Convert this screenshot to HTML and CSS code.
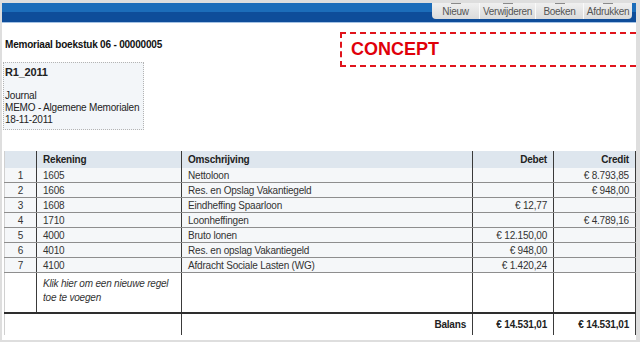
FILE: index.html
```html
<!DOCTYPE html>
<html>

<head>
  <meta charset="UTF-8" />
  <title>Memoriaal boekstuk</title>
  <link rel="stylesheet" href="styles.css">
</head>

<body>
  <div class="frame">
    <div class="topbar">
      <div class="toolbar">
        <button type="button" class="tool tool-nieuw"><span class="tick"></span>Nieuw</button>
        <button type="button" class="tool tool-verwijderen"><span class="tick"></span>Verwijderen</button>
        <button type="button" class="tool tool-boeken"><span class="tick"></span>Boeken</button>
        <button type="button" class="tool tool-afdrukken"><span class="tick"></span>Afdrukken</button>
      </div>
    </div>

    <div class="head">
      <div class="head-left">
        <div class="title">Memoriaal boekstuk 06 - 00000005</div>
        <div class="card">
          <div class="card-code">R1_2011</div>
          <div class="card-line">Journal</div>
          <div class="card-line">MEMO - Algemene Memorialen</div>
          <div class="card-line">18-11-2011</div>
        </div>
      </div>
      <div class="concept">CONCEPT</div>
    </div>

    <table class="lines">
      <colgroup>
        <col class="c-nr">
        <col class="c-rek">
        <col class="c-oms">
        <col class="c-deb">
        <col class="c-cre">
      </colgroup>
      <thead>
        <tr>
          <th></th>
          <th>Rekening</th>
          <th>Omschrijving</th>
          <th class="num">Debet</th>
          <th class="num">Credit</th>
        </tr>
      </thead>
      <tbody>
        <tr><td class="nr">1</td><td>1605</td><td>Nettoloon</td><td class="num"></td><td class="num">€ 8.793,85</td></tr>
        <tr><td class="nr">2</td><td>1606</td><td>Res. en Opslag Vakantiegeld</td><td class="num"></td><td class="num">€ 948,00</td></tr>
        <tr><td class="nr">3</td><td>1608</td><td>Eindheffing Spaarloon</td><td class="num">€ 12,77</td><td class="num"></td></tr>
        <tr><td class="nr">4</td><td>1710</td><td>Loonheffingen</td><td class="num"></td><td class="num">€ 4.789,16</td></tr>
        <tr><td class="nr">5</td><td>4000</td><td>Bruto lonen</td><td class="num">€ 12.150,00</td><td class="num"></td></tr>
        <tr><td class="nr">6</td><td>4010</td><td>Res. en opslag Vakantiegeld</td><td class="num">€ 948,00</td><td class="num"></td></tr>
        <tr><td class="nr">7</td><td>4100</td><td>Afdracht Sociale Lasten (WG)</td><td class="num">€ 1.420,24</td><td class="num"></td></tr>
        <tr class="add-row">
          <td class="nr"></td>
          <td class="add-text">Klik hier om een nieuwe regel<br>toe te voegen</td>
          <td></td>
          <td></td>
          <td></td>
        </tr>
      </tbody>
      <tfoot>
        <tr class="balance">
          <td colspan="2"></td>
          <td class="num">Balans</td>
          <td class="num">€ 14.531,01</td>
          <td class="num">€ 14.531,01</td>
        </tr>
      </tfoot>
    </table>
  </div>
</body>

</html>
```

FILE: styles.css
```css
body {
  margin: 0;
  font-family: "Liberation Sans", Arial, sans-serif;
  font-size: 10px;
  letter-spacing: -0.2px;
  color: #222;
  background: #fff;
}

/* Outer window frame */
.frame {
  width: 640px;
  height: 342px;
  box-sizing: border-box;
  border: 2px solid #dedede;
  border-top-width: 3px;
  border-right-width: 4px;
}

/* Blue top bar with toolbar buttons */
.topbar {
  display: flex;
  justify-content: flex-end;
  height: 19px;
  padding-right: 4px;
  background: linear-gradient(#1c6dba 0, #1c6dba 50%, #0e4d9a 50%, #0e4d9a 100%);
  border-bottom: 1px solid #a4c2e4;
}

.toolbar {
  display: flex;
  height: 16px;
  border-radius: 0 0 4px 4px;
  overflow: hidden;
  background: linear-gradient(#f0f0f0, #dadada);
}

.tool {
  position: relative;
  height: 16px;
  padding: 0;
  border: none;
  border-left: 1px solid #fafafa;
  background: none;
  font-family: "Liberation Sans", Arial, sans-serif;
  font-size: 10px;
  letter-spacing: -0.3px;
  line-height: 17px;
  color: #555;
}

.tool:first-child {
  border-left: none;
}

.tool-nieuw { width: 47px; }
.tool-verwijderen { width: 56px; }
.tool-boeken { width: 48px; }
.tool-afdrukken { width: 49px; }

.tick {
  position: absolute;
  top: 0;
  left: 50%;
  width: 10px;
  height: 1px;
  margin-left: -5px;
  background: #8a8a8a;
}

/* Heading area */
.head {
  display: flex;
  align-items: flex-start;
}

.head-left {
  padding-left: 1px;
}

.title {
  margin: 15px 0 0 2px;
  font-weight: bold;
  line-height: 13px;
  color: #111;
}

.card {
  width: 141px;
  height: 68px;
  box-sizing: border-box;
  margin-top: 11px;
  padding: 2px 1px 0 1px;
  border: 1px dotted #b4b4b4;
  background: #f3f6f9;
  color: #222;
}

.card-code {
  font-size: 11px;
  font-weight: bold;
  line-height: 14px;
  margin-bottom: 11px;
}

.card-line {
  line-height: 12px;
}

.concept {
  margin: 9px 0 0 auto;
  width: 296px;
  height: 35px;
  box-sizing: border-box;
  padding-left: 9px;
  border: 2px dashed #e0141c;
  border-right: none;
  color: #e0000a;
  font-size: 18px;
  font-weight: bold;
  letter-spacing: 0;
  line-height: 31px;
}

/* Journal lines table */
.lines {
  margin: 21px 0 0 2px;
  width: 631px;
  border-collapse: collapse;
  table-layout: fixed;
}

.c-nr { width: 32px; }
.c-rek { width: 145px; }
.c-oms { width: 291px; }
.c-deb { width: 81px; }
.c-cre { width: 82px; }

.lines th {
  height: 17px;
  padding: 0 6px;
  background: #dee6ee;
  border-left: 1px solid #3a3a3a;
  font-weight: bold;
  text-align: left;
  color: #222;
}

.lines th:first-child {
  border-left: 1px solid #d0d0d0;
}

.lines th:last-child,
.lines td:last-child {
  border-right: 1px solid #3a3a3a;
}

.lines td {
  height: 14px;
  padding: 0 6px;
  border-left: 1px solid #3a3a3a;
  border-bottom: 1px solid #8e8e8e;
  background: #f5f7f9;
  color: #333;
  white-space: nowrap;
  overflow: hidden;
}

.lines td:first-child {
  border-left: 1px solid #d0d0d0;
}

.lines .num {
  text-align: right;
}

.lines .nr {
  text-align: center;
  padding: 0;
}

.add-row td {
  height: 35px;
  background: #fff;
  border-bottom: none;
}

.add-row .add-text {
  vertical-align: top;
  padding-top: 4px;
  line-height: 14px;
  font-style: italic;
  white-space: normal;
}

.balance td {
  height: 21px;
  border-top: 2px solid #2e2e2e;
  border-bottom: none;
  background: #fff;
  font-weight: bold;
  color: #222;
}
```
